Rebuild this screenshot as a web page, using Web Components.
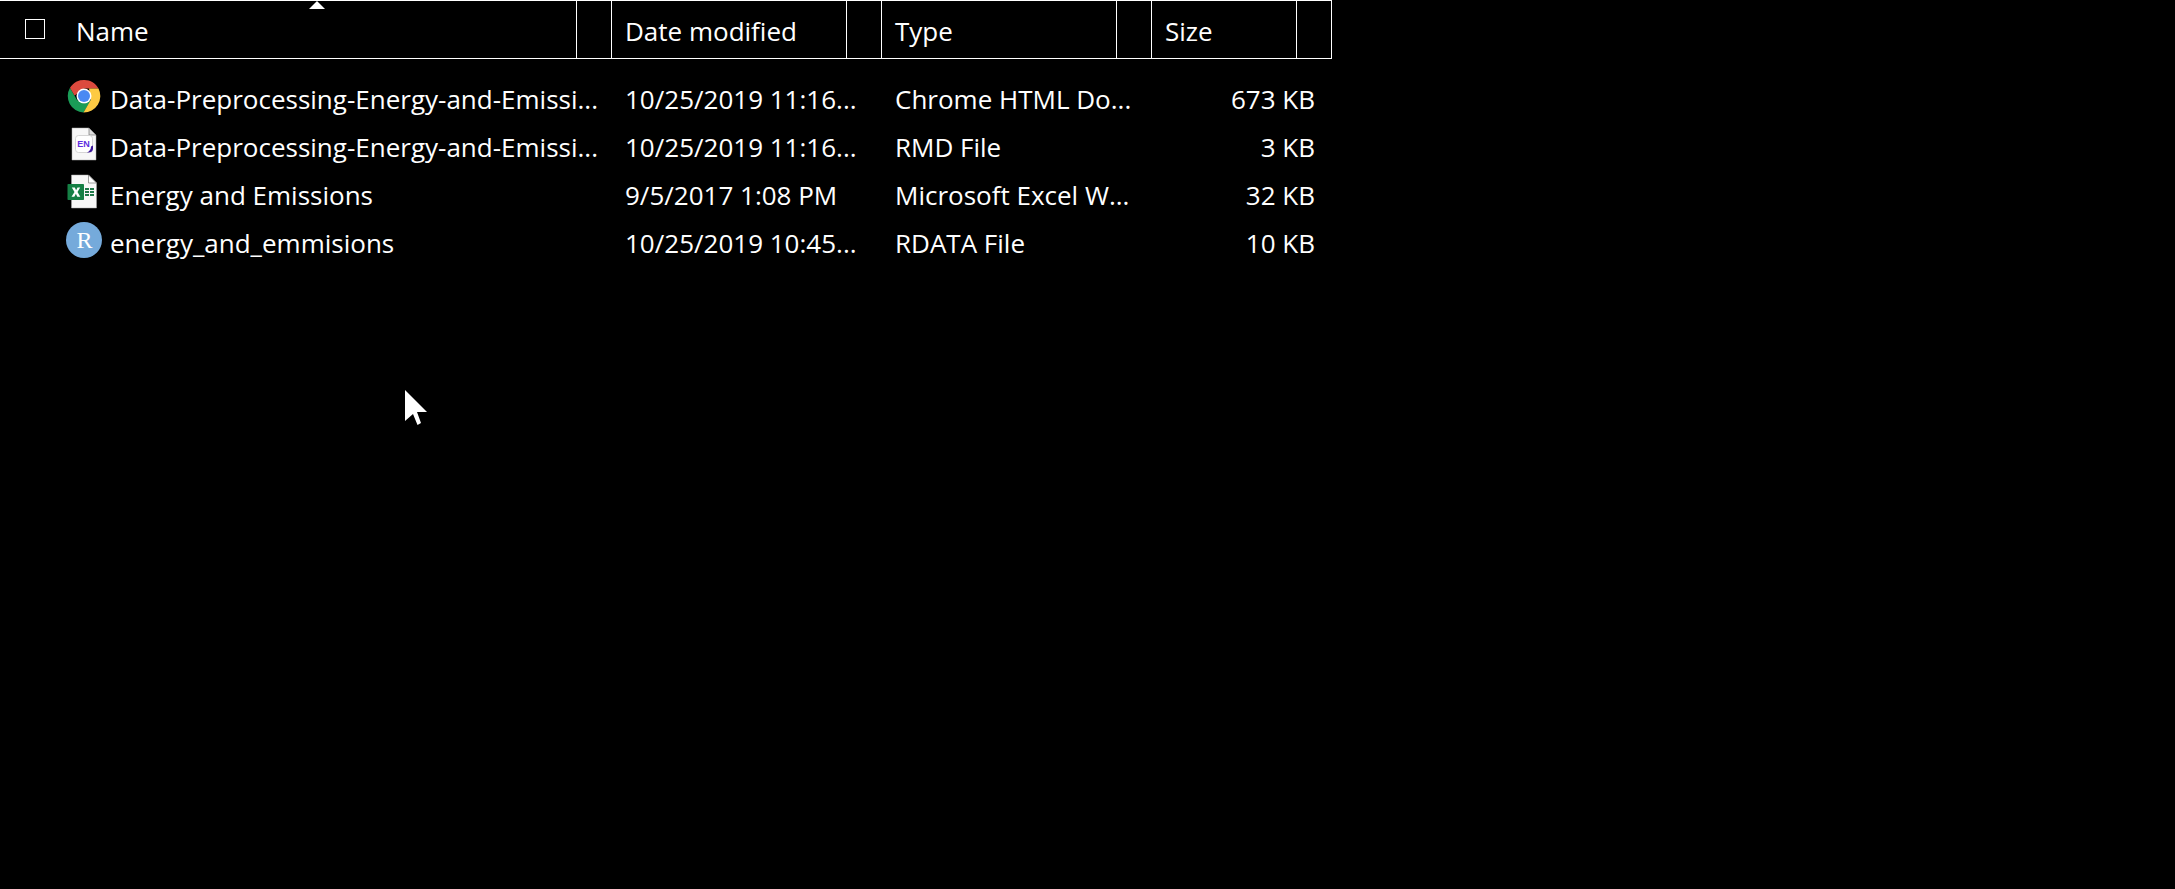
<!DOCTYPE html>
<html lang="en">
<head>
<meta charset="utf-8">
<title>Files</title>
<style>
body { margin: 0; min-height: 100vh; background: #000; color: #fff; font: 26px/42px "Open Sans", "Noto Sans", sans-serif; }
</style>
</head>
<body>
<file-list></file-list>
<mouse-pointer></mouse-pointer>
<script>
class BaseElement extends HTMLElement {
  render(html) {
    const t = document.createElement('template');
    t.innerHTML = html;
    this.attachShadow({ mode: 'open' }).append(t.content.cloneNode(true));
  }
}

const ICONS = {
  chrome: `
    <path d="M4 9.700A16.500 16.500 0 0 0 17.500 34.500L25 22 18 25.500 11 22Z" fill="#1a9c57"/>
    <path d="M4 9.700A16.500 16.500 0 0 1 32.500 10.500L18 10.500 11.500 15.500 8.500 17.500Z" fill="#dc4a3e"/>
    <path d="M32.500 10.500A16.500 16.500 0 0 1 17.500 34.500L25 21.500 23 10.500Z" fill="#fdca43"/>
    <circle cx="18" cy="18" r="7.500" fill="#fff"/>
    <circle cx="18" cy="18" r="6" fill="#4a89f3"/>`,
  rmd: `
    <path d="M6 2H23L30 9V34H6Z" fill="#f7f7f7" stroke="#aaa" stroke-width=".5"/>
    <path d="M23 2 30 9H23Z" fill="#ddd" stroke="#777" stroke-width=".7"/>
    <rect x="9.500" y="9.500" width="17" height="17" rx="3" fill="#fff" stroke="#ccc" stroke-width=".8"/>
    <text x="17.500" y="21" text-anchor="middle" font-family="Liberation Sans, sans-serif" font-weight="700" font-size="9" fill="#5d2fe0">EN</text>
    <path d="M21 26.500Q25 24.500 25 20.500L27 19.500V23Q26.500 26.500 22 26.500Z" fill="#3d169c"/>`,
  excel: `
    <path d="M5.500 1H22.500L30.500 9V34H5.500Z" fill="#f8f8f8" stroke="#aaa" stroke-width=".5"/>
    <path d="M22.500 1 30.500 9H22.500Z" fill="#fff" stroke="#777" stroke-width=".7"/>
    <path d="M19 14h4v2h-4zM24 14h4v2h-4zM19 17h4v2h-4zM24 17h4v2h-4zM19 20h4v2h-4zM24 20h4v2h-4z" fill="#21794a"/>
    <rect x="1.500" y="10" width="16.500" height="16" rx=".8" fill="#158045"/>
    <path d="M5.800 13.500h3l1.300 2.800 1.400-2.800h2.700l-2.700 4.500 2.800 4.700h-3L9.900 19.700 8.300 22.700H5.500L8.500 18Z" fill="#fff"/>`,
  rdata: `
    <circle cx="18" cy="18" r="18" fill="#75aadb"/>
    <text x="18.500" y="25.500" text-anchor="middle" font-family="Liberation Serif, serif" font-size="24" fill="#fff">R</text>`
};

customElements.define('file-icon', class extends BaseElement {
  connectedCallback() {
    if (this.shadowRoot) return;
    this.render(`
      <style>
        :host { display: block; flex: none; width: 36px; height: 36px; }
        svg { display: block; }
      </style>
      <svg width="36" height="36" viewBox="0 0 36 36" aria-hidden="true">${ICONS[this.getAttribute('kind')]}</svg>`);
  }
});

customElements.define('column-header', class extends BaseElement {
  connectedCallback() {
    if (this.shadowRoot) return;
    this.render(`
      <style>
        :host { display: flex; position: relative; height: 57px; }
        button { font: inherit; color: inherit; background: none; border: 0; margin: 0; padding: 0; }
        .label { flex: 1; text-align: left; padding: 2px 0 0 13px; }
        .filter { flex: none; box-sizing: border-box; width: 36px; border: solid #fff; border-width: 0 1px; }
        ::slotted(input) { appearance: none; box-sizing: border-box; width: 20px; height: 20px; margin: 18px 18px 0 25px; border: 1px solid #fff; border-radius: 0; }
        svg { display: none; position: absolute; top: 0; left: calc(50% + 3px); }
        :host([sorted]) svg { display: block; }
      </style>
      <slot name="select"></slot>
      <button class="label" type="button"><slot></slot></button>
      <button class="filter" type="button" aria-label="Filter"></button>
      <svg width="16" height="8" viewBox="0 0 16 8" aria-hidden="true"><path d="M8 0 16 8H0Z" fill="#fff"/></svg>`);
  }
});

const FILES = [
  ['chrome', 'Data-Preprocessing-Energy-and-Emissi...', '10/25/2019 11:16...', 'Chrome HTML Do...', '673 KB'],
  ['rmd', 'Data-Preprocessing-Energy-and-Emissi...', '10/25/2019 11:16...', 'RMD File', '3 KB'],
  ['excel', 'Energy and Emissions', '9/5/2017 1:08 PM', 'Microsoft Excel W...', '32 KB'],
  ['rdata', 'energy_and_emmisions', '10/25/2019 10:45...', 'RDATA File', '10 KB']
];

customElements.define('file-list', class extends BaseElement {
  connectedCallback() {
    if (this.shadowRoot) return;
    const rows = FILES.map(([kind, name, date, type, size]) => `
      <tr>
        <td><div class="name"><file-icon kind="${kind}"></file-icon><span>${name}</span></div></td>
        <td>${date}</td><td>${type}</td><td class="size">${size}</td>
      </tr>`).join('');
    this.render(`
      <style>
        :host { display: block; }
        table { table-layout: fixed; width: 1332px; border-collapse: separate; border-spacing: 0; }
        col.wide { width: 612px; }
        col.mid { width: 270px; }
        th { padding: 0; font-weight: 400; border: solid #fff; border-width: 1px 0; }
        tbody::before { content: ""; display: table-row; height: 13px; }
        td { height: 48px; box-sizing: border-box; padding: 6px 0 0 13px; white-space: nowrap; vertical-align: top; }
        td:first-child { padding: 0 0 0 66px; }
        .name { display: flex; align-items: center; gap: 8px; height: 48px; }
        .name span { padding-top: 6px; }
        td.size { text-align: right; padding-right: 17px; }
      </style>
      <table>
        <colgroup><col class="wide"><col class="mid"><col class="mid"><col></colgroup>
        <thead><tr>
          <th scope="col"><column-header sorted><input slot="select" type="checkbox" aria-label="Select all">Name</column-header></th>
          <th scope="col"><column-header>Date modified</column-header></th>
          <th scope="col"><column-header>Type</column-header></th>
          <th scope="col"><column-header>Size</column-header></th>
        </tr></thead>
        <tbody>${rows}</tbody>
      </table>`);
  }
});

customElements.define('mouse-pointer', class extends BaseElement {
  connectedCallback() {
    if (this.shadowRoot) return;
    this.render(`
      <style>:host { display: block; position: absolute; left: 405px; top: 390px; pointer-events: none; } svg { display: block; }</style>
      <svg width="24" height="36" viewBox="0 0 24 36" aria-hidden="true"><path d="M0 0 22 22H12L16 33 12.500 35 8 24 0 31Z" fill="#fff"/></svg>`);
  }
});
</script>
</body>
</html>
